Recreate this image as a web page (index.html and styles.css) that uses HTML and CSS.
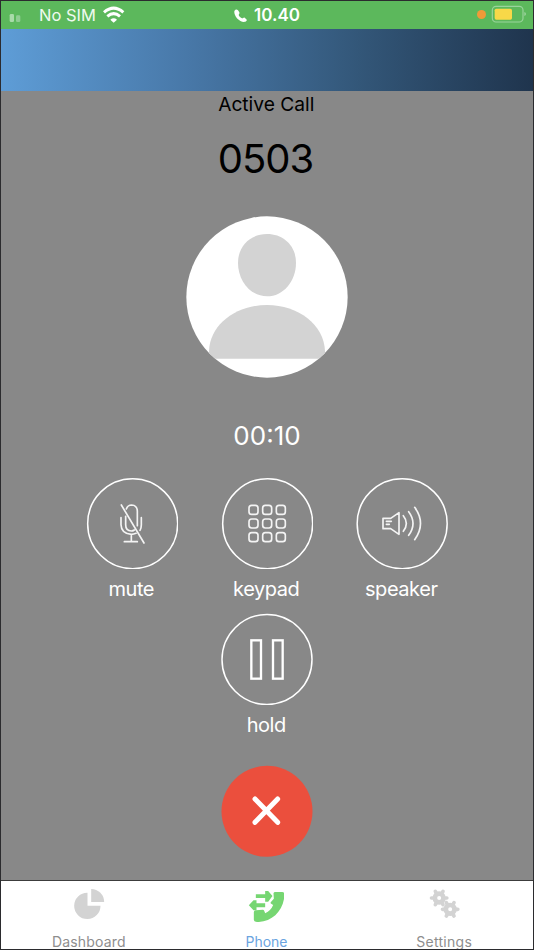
FILE: index.html
```html
<!DOCTYPE html>
<html lang="en">
<head>
<meta charset="utf-8">
<title>Active Call</title>
<link rel="stylesheet" href="styles.css">
</head>
<body>
<div class="phone">
  <header class="status">
    <div class="status-left">
      <svg class="signal" viewBox="27 39 36 27"><rect x="29" y="42" width="13" height="24" rx="4" fill="#a9dba9"/><rect x="48" y="46" width="13" height="20" rx="4" fill="#90cd92"/></svg>
      <span class="carrier">No SIM</span>
      <svg class="wifi" viewBox="309 18 66 51"><g fill="none" stroke="#fff" stroke-width="9"><path d="M312 37Q341 12 370 37"/><path d="M322 49Q341 33 360 49"/></g><path d="M331 59Q341 51 351 59L341 68Z" fill="#fff"/></svg>
    </div>
    <div class="status-time">
      <svg class="handset" viewBox="159 24 45 45"><path d="M163 33C166 27 171 27 174 31L178 37C180 41 176 43 176 45C178 50 182 53 186 55C188 56 191 51 194 53L199 58C203 62 197 66 192 66C178 66 161 48 163 33Z" fill="#fff"/></svg>
      <span class="time">10.40</span>
    </div>
    <div class="status-right">
      <span class="dot"></span>
      <svg class="battery" viewBox="393 15 108 54"><rect x="397" y="19" width="92" height="47" rx="11" fill="none" stroke="#9ad39b" stroke-width="3.5"/><rect x="404" y="26" width="52" height="33" rx="5" fill="#f8d848"/><path d="M493 36Q498 37 498 42Q498 47 493 48Z" fill="#9ad39b"/></svg>
    </div>
  </header>
  <div class="banner"></div>
  <main class="call">
    <h1 class="title">Active Call</h1>
    <p class="number">0503</p>
    <svg class="avatar" viewBox="18 33 486 486">
      <defs><clipPath id="face"><circle cx="261" cy="276" r="242"/></clipPath></defs>
      <circle cx="261" cy="276" r="242" fill="#fff"/>
      <g fill="#d3d3d3" clip-path="url(#face)"><path d="M261 87C312 87 348 124 348 173C348 228 310 274 261 274C212 274 174 228 174 173C174 124 210 87 261 87Z"/><path d="M87 461V438C90 360 166 300 261 300C356 300 432 360 435 438V461Z"/></g>
    </svg>
    <p class="timer">00:10</p>
    <div class="controls">
      <div class="control">
        <svg class="button" viewBox="18 21 276 276"><circle class="ring" cx="158" cy="161" r="135"/><g class="glyph"><path d="M139 117Q143 105 155 105Q172 106 172 124V167M137 139V164Q137 182 154 183Q159 183 163 180"/><path d="M123 143V164Q124 191 154 193Q161 193 168 190M184 143V164Q184 174 180 181M154 193V214M133 215H172M124 105L192 219"/></g></svg>
        <span class="label">mute</span>
      </div>
      <div class="control">
        <svg class="button" viewBox="18 186 276 276"><circle class="ring" cx="158" cy="326" r="135"/><g class="glyph"><rect x="102" y="271" width="27" height="27" rx="8"/><rect x="143" y="271" width="27" height="27" rx="8"/><rect x="184" y="271" width="27" height="27" rx="8"/><rect x="102" y="312" width="27" height="27" rx="8"/><rect x="143" y="312" width="27" height="27" rx="8"/><rect x="184" y="312" width="27" height="27" rx="8"/><rect x="102" y="353" width="27" height="27" rx="8"/><rect x="143" y="353" width="27" height="27" rx="8"/><rect x="184" y="353" width="27" height="27" rx="8"/></g></svg>
        <span class="label">keypad</span>
      </div>
      <div class="control">
        <svg class="button" viewBox="18 21 276 276"><circle class="ring" cx="156.500" cy="161" r="135"/><g class="glyph"><path d="M99 145H122L147 128V193L122 176H99ZM109 154H124M109 163H118"/><path d="M160 137Q178 160 160 184M176 125Q202 160 176 196M194 112Q229 160 194 209"/></g></svg>
        <span class="label">speaker</span>
      </div>
    </div>
    <div class="control">
      <svg class="button" viewBox="18 24 276 276"><circle class="ring" cx="156" cy="163.500" r="135"/><g fill="none" stroke="#fff" stroke-width="7"><rect x="109" y="106" width="29" height="115"/><rect x="174" y="106" width="29" height="115"/></g></svg>
      <span class="label">hold</span>
    </div>
    <svg class="button hangup" viewBox="18 30 276 276"><circle cx="156" cy="169" r="136.500" fill="#eb4f3d"/><path d="M120 132L188 202M188 132L120 202" stroke="#fff" stroke-width="15" stroke-linecap="round"/></svg>
  </main>
  <nav class="tabs">
    <div class="tab">
      <svg class="tab-icon" viewBox="212.500 48 108 108"><g fill="#d3d3d3"><path d="M262 68V107H301A39.500 39.500 0 1 1 262 68Z"/><path d="M273 57A39 39 0 0 1 312 96H273Z"/></g></svg>
      <span class="tab-label dashboard">Dashboard</span>
    </div>
    <div class="tab active">
      <svg class="tab-icon" viewBox="85.500 48 108 108"><g fill="#76d672"><path d="M162 70Q163 66 167 66H188Q195 66 195 73C193 120 161 153 118 156Q104 157 103 149V126Q103 121 109 121L130 119Q133 119 134 122L137 130Q154 122 161 105L155 101Q151 99 155 95L163 86Z"/><path d="M109 73H137V63H146L159 78L146 95H137V84H109ZM137 100H111V91H102L88 106L102 121H111V112H137Z"/></g></svg>
      <span class="tab-label">Phone</span>
    </div>
    <div class="tab">
      <svg class="tab-icon" viewBox="108.500 48 108 108"><defs><g id="gear"><circle r="13" stroke-width="14"/><path stroke-width="11" stroke-linecap="round" d="M17 0H23M-17 0H-23M8.500 14.700L11.500 20M-8.500 14.700L-11.500 20M8.500 -14.700L11.500 -20M-8.500 -14.700L-11.500 -20"/></g></defs><g fill="none" stroke="#d3d3d3"><use href="#gear" x="148" y="84"/><use href="#gear" x="181" y="118"/></g></svg>
      <span class="tab-label settings">Settings</span>
    </div>
  </nav>
</div>
</body>
</html>
```
FILE: styles.css
```css
* { box-sizing: border-box; }
body, h1, p { margin: 0; }
body { font-family: Inter, "Liberation Sans", sans-serif; }
svg { display: block; flex: none; }

.phone {
  position: relative;
  display: flex;
  flex-direction: column;
  width: 534px;
  height: 950px;
  overflow: hidden;
  background: #888;
}
.phone::after {
  content: "";
  position: absolute;
  inset: 0;
  border: 1px solid #2b2b2e;
  pointer-events: none;
}

.status {
  display: grid;
  grid-template-columns: 1fr auto 1fr;
  height: 29px;
  padding: 0 7px 0 9px;
  background: #5cb85c;
  color: #fff;
  font-size: 17px;
  line-height: 30px;
}
.status-left, .status-time, .status-right { display: flex; white-space: nowrap; }
.status-left { color: #effaef; }
.status-right { justify-content: flex-end; }
.signal { width: 12px; height: 9px; margin-top: 13px; }
.carrier { margin-left: 18px; width: 64px; font-size: 16.5px; }
.wifi { width: 22px; height: 17px; margin-top: 6px; }
.handset { width: 15px; height: 15px; margin: 8px 6px 0 -3px; }
.time { font-weight: 600; }
.dot { width: 9px; height: 9px; margin: 10px 5px 0 0; border-radius: 50%; background: #f19a38; }
.battery { width: 36px; height: 18px; margin-top: 5px; }

.banner {
  height: 62px;
  background: linear-gradient(90deg, #5e9dd7 0%, #4878a8 35%, #335779 67%, #1f344d 100%);
}

.call { flex: 1; display: flex; flex-direction: column; align-items: center; }
.title { padding: 1px 1.5px 0 0; font-size: 19.2px; font-weight: 400; line-height: 24px; }
.number { margin-top: 18px; padding-right: 3px; font-size: 40px; line-height: 50px; letter-spacing: -1px; }
.avatar { width: 162px; height: 162px; margin-top: 32px; }
.timer { margin-top: 43px; font-size: 26px; line-height: 30px; color: #fff; }
.controls { display: flex; gap: 43px; margin: 26px 0 12px; }
.control { display: flex; flex-direction: column; align-items: center; width: 92px; }
.button { width: 92px; height: 92px; }
.ring { fill: none; stroke: #fff; stroke-width: 4.5; }
.glyph { fill: none; stroke: #f4f4f4; stroke-width: 5; stroke-linecap: round; stroke-linejoin: round; }
.label { margin: 7px 0 -1px; padding-right: 1.5px; font-size: 20px; line-height: 26px; letter-spacing: -0.45px; color: #fff; white-space: nowrap; }
.hangup { margin-top: 28px; }

.tabs {
  display: grid;
  grid-template-columns: repeat(3, 1fr);
  height: 70px;
  padding: 5px 1px 0 0;
  border-top: 1px solid #3c3c3c;
  background: #fff;
}
.tab { display: flex; flex-direction: column; align-items: center; color: #8e8e8e; }
.tab.active { color: #6ba4df; }
.tab-icon { width: 36px; height: 36px; }
.tab-label { margin-top: 11px; font-size: 14px; line-height: 18px; }
.dashboard { letter-spacing: 0.15px; }
.settings { letter-spacing: 0.3px; }
```
